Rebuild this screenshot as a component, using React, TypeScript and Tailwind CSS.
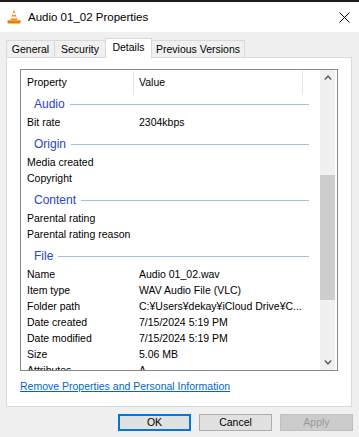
import React from "react";

const rowFont = "text-[10.5px] leading-[13px]";

function Row({ k, v }: { k: string; v?: string }) {
  return (
    <div className={`h-[16px] shrink-0 flex items-center whitespace-nowrap ${rowFont}`}>
      <div className="w-[113px] pl-[6px] shrink-0 overflow-hidden">{k}</div>
      <div className="w-[168px] pl-[5px] shrink-0 overflow-hidden">{v ?? ""}</div>
    </div>
  );
}

function Group({ name, first }: { name: string; first?: boolean }) {
  return (
    <div
      className={`${first ? "h-[19px] pb-px" : "h-[24px] pt-[4px]"} shrink-0 flex items-center pl-[13px] pr-[11px]`}
    >
      <span className="text-[12px] leading-[14px] text-[#2a45c8] whitespace-nowrap">{name}</span>
      <div className="flex-1 h-px ml-[5px] bg-[#a6bfe9]" />
    </div>
  );
}

function Tab({
  label,
  w,
  selected,
  cls,
}: {
  label: string;
  w: string;
  selected?: boolean;
  cls: string;
}) {
  return (
    <div
      className={`${w} ${cls} ${
        selected
          ? "h-[20px] bg-white -mb-px relative z-10 pb-[3px]"
          : "h-[17px] bg-[#f0f0f0]"
      } border-[#d9d9d9] border-t flex items-center justify-center text-[10.5px] leading-[13px] whitespace-nowrap`}
    >
      {label}
    </div>
  );
}

export default function App() {
  return (
    <div className="w-[359px] h-[437px] bg-[#f0f0f0] flex flex-col overflow-hidden font-['Liberation_Sans',Arial,sans-serif] text-black">
      <div className="h-[2px] bg-[#1c1c1c] shrink-0" />
      {/* Title bar */}
      <div className="h-[30px] bg-white flex items-center pl-[7px] pr-[9px] shrink-0">
        <svg width="14" height="15" viewBox="0 0 14 15" className="shrink-0 -mt-px">
          <polygon points="7,0.5 10.6,11.5 3.4,11.5" fill="#f58a0b" />
          <polygon points="5.9,3.9 8.1,3.9 8.8,6 5.2,6" fill="#ffffff" />
          <polygon points="4.7,7.6 9.3,7.6 9.9,9.4 4.1,9.4" fill="#ffffff" />
          <rect x="0.5" y="11" width="13" height="3.5" rx="0.8" fill="#e97a00" />
          <rect x="1.5" y="11" width="11" height="1.2" fill="#ffa733" />
        </svg>
        <span className="ml-[7px] text-[11.5px] leading-[14px] whitespace-nowrap">
          Audio 01_02 Properties
        </span>
        <div className="flex-1" />
        <svg width="11" height="11" viewBox="0 0 11 11">
          <path d="M0.5 0.5 L10.5 10.5 M10.5 0.5 L0.5 10.5" stroke="#000" strokeWidth="1" />
        </svg>
      </div>
      <div className="h-[6px] shrink-0" />
      {/* Tabs */}
      <div className="h-[19px] flex items-end pl-[6px] shrink-0">
        <Tab label="General" w="w-[48px]" cls="border-l" />
        <Tab label="Security" w="w-[51px]" cls="border-l" />
        <Tab label="Details" w="w-[47px]" cls="border-l border-r" selected />
        <Tab label="Previous Versions" w="w-[93px]" cls="border-r" />
      </div>
      {/* Panel */}
      <div className="ml-[6px] w-[346px] h-[350px] border border-[#d9d9d9] bg-white flex flex-col shrink-0">
        <div className="mt-[11px] ml-[13px] w-[318px] h-[302px] shrink-0 border border-[#828790] flex bg-white">
          <div className="w-[299px] flex flex-col overflow-hidden">
            {/* header */}
            <div className={`h-[25px] flex items-stretch shrink-0 ${rowFont}`}>
              <div className="w-[112px] pl-[6px] flex items-center">Property</div>
              <div className="w-px bg-[#e5e5e5] mt-px" />
              <div className="w-[168px] pl-[5px] flex items-center">Value</div>
              <div className="w-px bg-[#e5e5e5] mt-px" />
            </div>
            <Group name="Audio" first />
            <Row k="Bit rate" v="2304kbps" />
            <Group name="Origin" />
            <Row k="Media created" />
            <Row k="Copyright" />
            <Group name="Content" />
            <Row k="Parental rating" />
            <Row k="Parental rating reason" />
            <Group name="File" />
            <Row k="Name" v="Audio 01_02.wav" />
            <Row k="Item type" v="WAV Audio File (VLC)" />
            <Row k="Folder path" v="C:¥Users¥dekay¥iCloud Drive¥C..." />
            <Row k="Date created" v="7/15/2024 5:19 PM" />
            <Row k="Date modified" v="7/15/2024 5:19 PM" />
            <Row k="Size" v="5.06 MB" />
            <Row k="Attributes" v="A" />
          </div>
          {/* scrollbar */}
          <div className="w-[15px] bg-[#f0f0f0] flex flex-col shrink-0">
            <div className="h-[17px] flex items-center justify-center pb-[3px] shrink-0">
              <svg width="8" height="5" viewBox="0 0 8 5">
                <path d="M0.8 4.5 L4 1.2 L7.2 4.5" stroke="#606060" strokeWidth="1.5" fill="none" />
              </svg>
            </div>
            <div className="flex-1 flex flex-col">
              <div className="mt-[88px] h-[125px] bg-[#cdcdcd]" />
            </div>
            <div className="h-[17px] flex items-center justify-center pt-[1px] shrink-0">
              <svg width="8" height="5" viewBox="0 0 8 5">
                <path d="M0.8 0.5 L4 3.8 L7.2 0.5" stroke="#606060" strokeWidth="1.5" fill="none" />
              </svg>
            </div>
          </div>
          <div className="w-[2px] shrink-0" />
        </div>
        <div className="mt-[9px] ml-[13px] h-[13px] text-[10.5px] leading-[13px] text-[#0066cc] underline whitespace-nowrap">
          Remove Properties and Personal Information
        </div>
      </div>
      {/* Buttons */}
      <div className="mt-[7px] flex justify-end gap-[8px] pr-[6px] shrink-0">
        <div className="w-[73px] h-[17px] border-2 border-[#0078d7] bg-[#e1e1e1] flex items-center justify-center text-[10.5px] leading-[13px]">
          OK
        </div>
        <div className="w-[73px] h-[17px] border border-[#adadad] bg-[#e1e1e1] flex items-center justify-center text-[10.5px] leading-[13px]">
          Cancel
        </div>
        <div className="w-[73px] h-[17px] border border-[#bfbfbf] bg-[#cccccc] flex items-center justify-center text-[10.5px] leading-[13px] text-[#9a9a9a]">
          Apply
        </div>
      </div>
    </div>
  );
}
